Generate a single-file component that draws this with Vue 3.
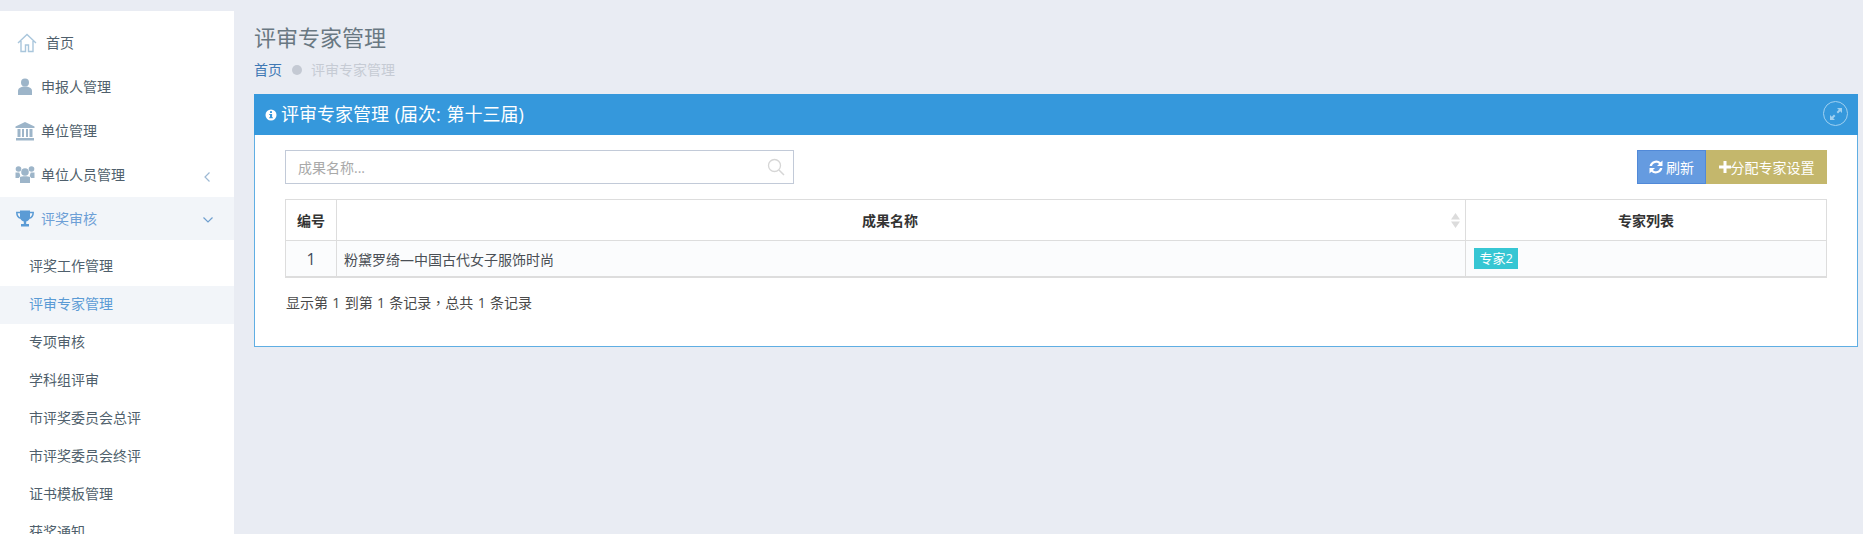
<script setup>
const subs = ['评奖工作管理', '评审专家管理', '专项审核', '学科组评审', '市评奖委员会总评', '市评奖委员会终评', '证书模板管理', '获奖通知']
</script>

<template>
  <div class="page">
    <aside class="side">
      <div class="item home">
        <svg class="ic-home" viewBox="0 0 20 20" width="20" height="20"><path d="M1 10 10 1.500 19 10M4 8v10.500h4.500V12h3v6.500H16V8" fill="none" stroke="#a9c6dc" stroke-width="1.400"/></svg>
        <span>首页</span>
      </div>
      <div class="item">
        <svg class="ic" viewBox="0 0 20 20" width="20" height="20"><circle cx="10" cy="5.500" r="4" fill="#9db5c9"/><path d="M3 18v-4c0-3 3-4.500 7-4.500s7 1.500 7 4.500v4z" fill="#9db5c9"/></svg>
        <span>申报人管理</span>
      </div>
      <div class="item">
        <svg class="ic" viewBox="0 0 20 20" width="20" height="20"><path d="M10 1 .5 5.500V7h19V5.500z M1 17h18v2.500H1z M2.500 8h3v8h-3z M7 8h2v8H7z M11 8h2v8h-2z M14.500 8h3v8h-3z" fill="#9db5c9"/></svg>
        <span>单位管理</span>
      </div>
      <div class="item">
        <svg class="ic" viewBox="0 0 20 20" width="20" height="20"><circle cx="3.500" cy="4" r="2.800" fill="#9db5c9"/><circle cx="16.500" cy="4" r="2.800" fill="#9db5c9"/><circle cx="10" cy="7" r="3.800" fill="#9db5c9"/><path d="M.5 7.500h3.800l1 3.500-1.500 2H.5zM19.500 7.500h-3.800l-1 3.500 1.500 2h3.300zM5 12c1-1 9-1 10 0v6H5z" fill="#9db5c9"/></svg>
        <span>单位人员管理</span>
        <svg class="chev" viewBox="0 0 8 12" width="8" height="12"><path d="M6.500 1.500 2 6l4.500 4.500" fill="none" stroke="#9db9d4" stroke-width="1.200"/></svg>
      </div>
      <div class="item open">
        <svg class="ic" viewBox="0 0 20 20" width="20" height="20"><path d="M5 1.500h10V8c0 2.500-2 4-3.800 4.500v2.500h2.800v2.500H6V15h2.800v-2.500C7 12 5 10.500 5 8z" fill="#5b9bd5"/><path d="M5 3.500H1.800c0 3.500 1.200 5 4 5.800M15 3.500h3.200c0 3.500-1.200 5-4 5.800" fill="none" stroke="#5b9bd5" stroke-width="1.500"/></svg>
        <span>评奖审核</span>
        <svg class="chev down" viewBox="0 0 12 8" width="12" height="8"><path d="M1.500 1.500 6 6l4.500-4.500" fill="none" stroke="#6f9fcf" stroke-width="1.200"/></svg>
      </div>
      <ul class="subs">
        <li v-for="(s, i) in subs" :key="s" :class="{ on: i === 1 }">{{ s }}</li>
      </ul>
    </aside>

    <main class="main">
      <h1 class="title">评审专家管理</h1>
      <div class="crumb">
        <span class="c-home">首页</span>
        <i class="dot"></i>
        <span class="c-cur">评审专家管理</span>
      </div>

      <section class="portlet">
        <header class="phead">
          <svg class="info" viewBox="0 0 12 12" width="12" height="12"><circle cx="6" cy="6" r="5.500" fill="#fff"/><rect x="5" y="2.200" width="2" height="1.800" fill="#3598dc"/><path d="M4.200 5h2.900v3.300h.8v1H4.200v-1H5V6h-.8z" fill="#3598dc"/></svg>
          <span class="ptitle">评审专家管理 (届次: 第十三届)</span>
          <span class="expand">
            <svg viewBox="0 0 14 14" width="14" height="14"><path d="M8 1h5v5l-1.800-1.800-2.200 2.200-1.400-1.400 2.200-2.200zM6 13H1V8l1.800 1.800 2.200-2.200 1.400 1.400-2.200 2.200z" fill="#9fd0f0"/></svg>
          </span>
        </header>

        <div class="pbody">
          <div class="toolbar">
            <div class="search">
              <span class="ph">成果名称...</span>
              <svg viewBox="0 0 18 18" width="18" height="18"><circle cx="7.500" cy="7.500" r="6" fill="none" stroke="#d6d6d6" stroke-width="1.300"/><path d="m12 12 5 5" stroke="#d6d6d6" stroke-width="1.500"/></svg>
            </div>
            <div class="btns">
              <button class="btn blue">
                <svg viewBox="0 0 14 14" width="14" height="14"><path d="M13.500 .5v5.500H8l2.100-2.100A4.300 4.300 0 0 0 3 6H.6a6.700 6.700 0 0 1 11.100-3.700zM.5 13.500V8H6l-2.100 2.100A4.300 4.300 0 0 0 11 8h2.400a6.700 6.700 0 0 1-11.100 3.700z" fill="#fff"/></svg>
                刷新
              </button>
              <button class="btn olive">
                <svg viewBox="0 0 12 12" width="12" height="12"><path d="M4.500 0h3v4.500H12v3H7.500V12h-3V7.500H0v-3h4.500z" fill="#fff"/></svg>分配专家设置
              </button>
            </div>
          </div>

          <table class="tbl">
            <colgroup><col class="c1" /><col /><col class="c3" /></colgroup>
            <thead>
              <tr>
                <th>编号</th>
                <th class="sort">成果名称
                  <svg class="sorter" viewBox="0 0 9 15" width="9" height="15"><path d="M4.500 0 9 6.500H0zM4.500 15 0 8.500h9z" fill="#dcdcdc"/></svg>
                </th>
                <th>专家列表</th>
              </tr>
            </thead>
            <tbody>
              <tr>
                <td class="num">1</td>
                <td>粉黛罗绮—中国古代女子服饰时尚</td>
                <td class="tagcell"><span class="tag">专家2</span></td>
              </tr>
            </tbody>
          </table>
          <p class="pageinfo">显示第 1 到第 1 条记录<span class="comma">，</span>总共 1 条记录</p>
        </div>
      </section>
    </main>
  </div>
</template>

<style>
html, body { margin: 0; background: #e9ecf3; overflow: hidden; }
</style>

<style scoped>
.page {
  display: flex;
  height: 534px;
  overflow: hidden;
  background: #e9ecf3;
  font-family: "Open Sans", "Noto Sans CJK SC", sans-serif;
  font-size: 14px;
  color: #4c5b66;
}
.side {
  flex: 0 0 234px;
  margin-top: 11px;
  padding-top: 10px;
  background: #fff;
  overflow: hidden;
}
.item {
  display: flex;
  align-items: center;
  height: 44px;
  padding-left: 15px;
  gap: 6px;
  position: relative;
  color: #4f5f6c;
}
.item span { padding-bottom: 2px; }
.home { gap: 9px; padding-left: 17px; }
.open { color: #6d9fd6; background: #f2f5f9; height: 43px; }
.ic { flex: none; }
.ic-home { flex: none; }
.chev { position: absolute; left: 203px; top: 18px; }
.chev.down { left: 202px; top: 19px; }
.subs {
  list-style: none;
  margin: 0;
  padding: 8px 0 0;
}
.subs li {
  height: 38px;
  line-height: 36px;
  padding-left: 29px;
  color: #4f5f6c;
}
.subs li.on { background: #f2f5f9; color: #5b9bd5; }

.main {
  flex: 1;
  min-width: 0;
  padding: 22px 5px 0 20px;
}
.title {
  margin: 0;
  font-size: 22px;
  font-weight: 400;
  line-height: 30px;
  color: #697882;
}
.crumb {
  display: flex;
  align-items: center;
  height: 20px;
  margin-top: 8px;
  line-height: 20px;
}
.c-home { color: #3f78b4; }
.dot {
  width: 10px;
  height: 10px;
  border-radius: 50%;
  background: #c4c9d3;
  margin: 0 9px 0 10px;
}
.c-cur { color: #c6cbd4; }

.portlet {
  margin-top: 14px;
  height: 253px;
  box-sizing: border-box;
  border: 1px solid #5faee3;
  border-top: 0;
  background: #fff;
}
.phead {
  display: flex;
  align-items: center;
  height: 41px;
  margin: 0 -1px;
  padding: 0 2px 0 11px;
  background: #3598dc;
  color: #fff;
  position: relative;
}
.info { flex: none; margin-right: 4px; }
.ptitle { font-size: 18px; line-height: 41px; word-spacing: 1px; }
.expand {
  position: absolute;
  right: 10px;
  top: 7px;
  box-sizing: border-box;
  width: 25px;
  height: 25px;
  border: 1px solid #9fd0f0;
  border-radius: 50%;
  display: flex;
  align-items: center;
  justify-content: center;
}
.pbody { padding: 15px 30px 0 30px; }
.toolbar {
  display: flex;
  justify-content: space-between;
  height: 34px;
}
.search {
  width: 509px;
  box-sizing: border-box;
  border: 1px solid #c2cad8;
  display: flex;
  align-items: center;
  justify-content: space-between;
  padding: 0 8px 0 12px;
}
.ph { color: #a9a9a9; }
.btns { display: flex; }
.btn {
  height: 34px;
  box-sizing: border-box;
  border: 0;
  padding: 0;
  color: #fff;
  font: inherit;
  display: flex;
  align-items: center;
  justify-content: center;
}
.blue { width: 69px; background: #659be0; border: 1px solid #5189d8; gap: 3px; }
.olive { width: 121px; background: #c4b76c; }

.tbl {
  width: 100%;
  margin-top: 15px;
  border-collapse: collapse;
  table-layout: fixed;
  border: 1px solid #ddd;
  border-bottom-width: 2px;
  color: #333;
}
.c1 { width: 51px; }
.c3 { width: 361px; }
.tbl th {
  height: 40px;
  padding: 0;
  border: 1px solid #ddd;
  font-weight: 700;
  font-size: 14px;
  text-align: center;
  position: relative;
}
.tbl th.sort { padding-right: 22px; }
.tbl td {
  height: 35px;
  padding: 0 7px;
  border: 1px solid #ddd;
  border-bottom-width: 2px;
  background: #fbfcfd;
  color: #4a4f55;
}
.tbl td.num { text-align: center; padding: 0; font-size: 16px; color: #3f4a5c; }
.tbl td.tagcell { padding-left: 8px; }
.sorter { position: absolute; right: 5px; top: 13px; }
.tag {
  display: inline-block;
  background: #36c6d3;
  color: #fff;
  font-size: 13px;
  line-height: 21px;
  padding: 0 5.5px;
  vertical-align: middle;
}
.pageinfo {
  margin: 14px 0 0 1px;
  line-height: 20px;
  color: #4a4a4a;
  word-spacing: 0.7px;
}
.comma { font-family: "Noto Sans CJK TC", sans-serif; }
</style>
